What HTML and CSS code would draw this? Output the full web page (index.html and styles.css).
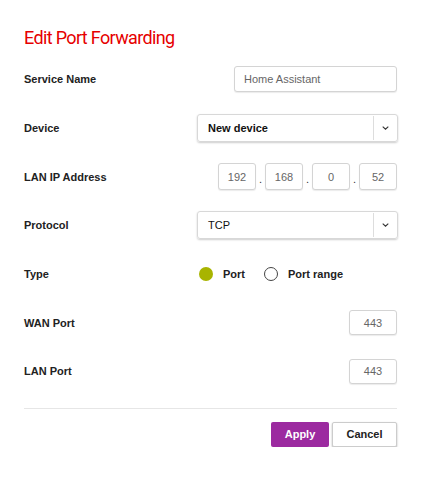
FILE: index.html
```html
<!DOCTYPE html>
<html lang="en">

<head>
    <meta charset="UTF-8">
    <meta name="viewport" content="width=device-width, initial-scale=1.0">
    <title>Edit Port Forwarding</title>
    <link rel="stylesheet" href="styles.css">
</head>

<body>
    <div class="page">
        <h1 class="title">Edit Port Forwarding</h1>

        <div class="form">
            <div class="row">
                <span class="label">Service Name</span>
                <input class="text-input name-input" type="text" value="Home Assistant">
            </div>

            <div class="row">
                <span class="label">Device</span>
                <div class="select">
                    <span class="select-value bold">New device</span>
                    <span class="select-arrow">
                        <svg width="7" height="4" viewBox="0 0 7 4"><path d="M0.7 0.6l2.8 2.6 2.8-2.6" fill="none" stroke="#333" stroke-width="1.1"/></svg>
                    </span>
                </div>
            </div>

            <div class="row">
                <span class="label">LAN IP Address</span>
                <div class="ip">
                    <input class="text-input ip-box" type="text" value="192">
                    <span class="dot">.</span>
                    <input class="text-input ip-box" type="text" value="168">
                    <span class="dot">.</span>
                    <input class="text-input ip-box" type="text" value="0">
                    <span class="dot">.</span>
                    <input class="text-input ip-box" type="text" value="52">
                </div>
            </div>

            <div class="row">
                <span class="label">Protocol</span>
                <div class="select">
                    <span class="select-value">TCP</span>
                    <span class="select-arrow">
                        <svg width="7" height="4" viewBox="0 0 7 4"><path d="M0.7 0.6l2.8 2.6 2.8-2.6" fill="none" stroke="#333" stroke-width="1.1"/></svg>
                    </span>
                </div>
            </div>

            <div class="row">
                <span class="label">Type</span>
                <div class="radios">
                    <label class="radio"><span class="circle checked"></span>Port</label>
                    <label class="radio"><span class="circle"></span>Port range</label>
                </div>
            </div>

            <div class="row">
                <span class="label">WAN Port</span>
                <input class="text-input port-input" type="text" value="443">
            </div>

            <div class="row">
                <span class="label">LAN Port</span>
                <input class="text-input port-input" type="text" value="443">
            </div>
        </div>

        <div class="footer">
            <button class="btn btn-apply">Apply</button>
            <button class="btn btn-cancel">Cancel</button>
        </div>
    </div>
</body>

</html>
```

FILE: styles.css
```css
body {
    margin: 0;
    padding: 0;
    background-color: #fff;
    font-family: "Liberation Sans", Arial, sans-serif;
    color: #222;
}

.page {
    padding: 0 24px;
}

.title {
    margin: 0;
    padding-top: 27px;
    font-family: Roboto, sans-serif;
    font-size: 18px;
    line-height: 22px;
    font-weight: normal;
    color: #e60000;
    letter-spacing: -0.65px;
}

.form {
    margin-top: 6px;
}

.row {
    height: 48.7px;
    display: flex;
    justify-content: space-between;
    align-items: center;
}

.label {
    font-size: 11px;
    font-weight: bold;
}

.text-input {
    box-sizing: border-box;
    height: 26px;
    border: 1px solid #d4d4d4;
    border-radius: 3px;
    box-shadow: 0 1px 1px rgba(0, 0, 0, 0.08);
    font-family: "Liberation Sans", Arial, sans-serif;
    font-size: 11px;
    color: #666;
    padding: 0 9px;
    outline: none;
}

.name-input {
    width: 163px;
}

.select {
    box-sizing: border-box;
    width: 201px;
    height: 28px;
    margin-right: -1px;
    border: 1px solid #d8d8d8;
    border-radius: 3px;
    box-shadow: 0 1px 2px rgba(0, 0, 0, 0.2);
    display: flex;
    align-items: center;
}

.select-value {
    flex: 1;
    padding-left: 10px;
    font-size: 11px;
    color: #111;
}

.bold {
    font-weight: bold;
}

.select-arrow {
    width: 23px;
    height: 24px;
    border-left: 1px solid #ddd;
    display: flex;
    align-items: center;
    justify-content: center;
}

.ip {
    display: flex;
    align-items: center;
}

.ip-box {
    width: 38px;
    height: 27px;
    padding: 0;
    text-align: center;
}

.dot {
    width: 9px;
    text-align: center;
    font-size: 11px;
    color: #333;
    padding-top: 4px;
}

.radios {
    display: flex;
    align-items: center;
    width: 198px;
}

.radio {
    display: flex;
    align-items: center;
    font-size: 11px;
    font-weight: bold;
    margin-right: 19px;
}

.circle {
    box-sizing: border-box;
    width: 14px;
    height: 14px;
    border-radius: 50%;
    border: 1px solid #444;
    margin-right: 10px;
}

.circle.checked {
    border: none;
    background-color: #a8b400;
}

.port-input {
    width: 48px;
    height: 25px;
    padding: 0;
    text-align: center;
}

.footer {
    margin-top: 12px;
    border-top: 1px solid #e6e6e6;
    padding-top: 13px;
    display: flex;
    justify-content: flex-end;
    gap: 3px;
}

.btn {
    height: 25px;
    font-family: "Liberation Sans", Arial, sans-serif;
    font-size: 11px;
    font-weight: bold;
    border-radius: 2px;
    cursor: pointer;
}

.btn-apply {
    width: 58px;
    border: none;
    background-color: #9c2aa0;
    color: #fff;
}

.btn-cancel {
    width: 65px;
    border: 1px solid #ccc;
    background-color: #fff;
    color: #222;
    box-shadow: 0 1px 2px rgba(0, 0, 0, 0.3);
}
```
